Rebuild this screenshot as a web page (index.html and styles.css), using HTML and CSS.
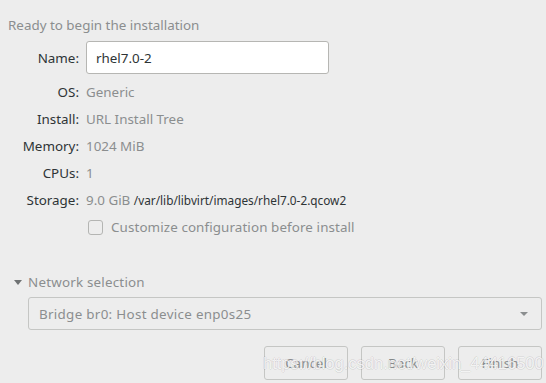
FILE: index.html
```html
<!DOCTYPE html>
<html lang="en">
<head>
    <meta charset="UTF-8">
    <title>New VM - Step 5</title>
    <link rel="stylesheet" href="styles.css">
</head>
<body>
    <div class="page">
        <p class="title">Ready to begin the installation</p>

        <div class="details">
            <label class="key" for="vmName">Name:</label>
            <input type="text" id="vmName" class="name-input" value="rhel7.0-2">

            <span class="key">OS:</span>
            <span class="value">Generic</span>

            <span class="key">Install:</span>
            <span class="value">URL Install Tree</span>

            <span class="key">Memory:</span>
            <span class="value">1024 MiB</span>

            <span class="key">CPUs:</span>
            <span class="value">1</span>

            <span class="key">Storage:</span>
            <span class="value">9.0 GiB <span class="path">/var/lib/libvirt/images/rhel7.0-2.qcow2</span></span>

            <span></span>
            <label class="check">
                <span class="box"></span>
                Customize configuration before install
            </label>
        </div>

        <div class="expander">
            <span class="arrow"></span>
            Network selection
        </div>

        <div class="combo">
            <span>Bridge br0: Host device enp0s25</span>
            <span class="combo-arrow"></span>
        </div>

        <div class="actions">
            <button class="btn" disabled>Cancel</button>
            <button class="btn" disabled>Back</button>
            <button class="btn" disabled>Finish</button>
            <span class="watermark">https://blog.csdn.net/weixin_44416500</span>
        </div>
    </div>
</body>
</html>
```

FILE: styles.css
```css
* {
    margin: 0;
    padding: 0;
    box-sizing: border-box;
}

body {
    font-family: "Noto Sans", "DejaVu Sans", sans-serif;
    font-size: 13.4px;
    background: #ededed;
    color: #2e3436;
    overflow: hidden;
}

.page {
    padding: 16px 4px 0 8px;
}

.title {
    color: #8b8e8f;
    line-height: 18px;
    margin-bottom: 7px;
}

.details {
    display: grid;
    grid-template-columns: 71px 1fr;
    column-gap: 7px;
    row-gap: 9px;
    align-items: center;
}

.key {
    text-align: right;
    line-height: 18px;
    color: #2e3436;
}

.value {
    color: #8b8e8f;
    line-height: 18px;
}

.path {
    color: #2e3436;
    font-size: 11.8px;
}

.name-input {
    width: 243px;
    height: 33px;
    border: 1px solid #b6b6b3;
    border-radius: 3px;
    background: #fff;
    padding: 0 9px;
    font-family: inherit;
    font-size: 13.4px;
    color: #2e3436;
    outline: none;
}

.check {
    display: flex;
    align-items: center;
    gap: 8px;
    margin-left: 2px;
    color: #8b8e8f;
    line-height: 18px;
    letter-spacing: 0.1px;
}

.box {
    width: 15px;
    height: 15px;
    border: 1px solid #b4b5b3;
    border-radius: 3px;
    background: #ededed;
}

.expander {
    display: flex;
    align-items: center;
    gap: 6px;
    margin-top: 37px;
    padding-left: 6px;
    line-height: 18px;
    color: #8b8e8f;
    letter-spacing: 0.2px;
}

.arrow {
    width: 0;
    height: 0;
    border-left: 4px solid transparent;
    border-right: 4px solid transparent;
    border-top: 5px solid #6f7273;
}

.combo {
    display: flex;
    align-items: center;
    justify-content: space-between;
    height: 33px;
    margin: 6px 0 0 20px;
    padding: 0 13px 0 10px;
    border: 1px solid #c5c6c4;
    border-radius: 3px;
    color: #8b8e8f;
    letter-spacing: 0.3px;
}

.combo-arrow {
    width: 0;
    height: 0;
    border-left: 4px solid transparent;
    border-right: 4px solid transparent;
    border-top: 4px solid #8b8e8f;
}

.actions {
    position: relative;
    display: flex;
    justify-content: flex-end;
    gap: 13px;
    margin-top: 16px;
}

.btn {
    width: 84px;
    height: 34px;
    border: 1px solid #c5c6c4;
    border-radius: 3px;
    background: #ededed;
    font-family: inherit;
    font-size: 13.4px;
    color: #8b8e8f;
}

.watermark {
    position: absolute;
    left: 255px;
    top: 8px;
    font-family: "Liberation Sans", Arial, sans-serif;
    font-size: 16.5px;
    color: rgba(255, 255, 255, 0.75);
    text-shadow: 1px 0 0 rgba(0, 0, 0, 0.08), -1px 0 0 rgba(0, 0, 0, 0.08), 0 1px 0 rgba(0, 0, 0, 0.08), 0 -1px 0 rgba(0, 0, 0, 0.08);
    pointer-events: none;
}
```
